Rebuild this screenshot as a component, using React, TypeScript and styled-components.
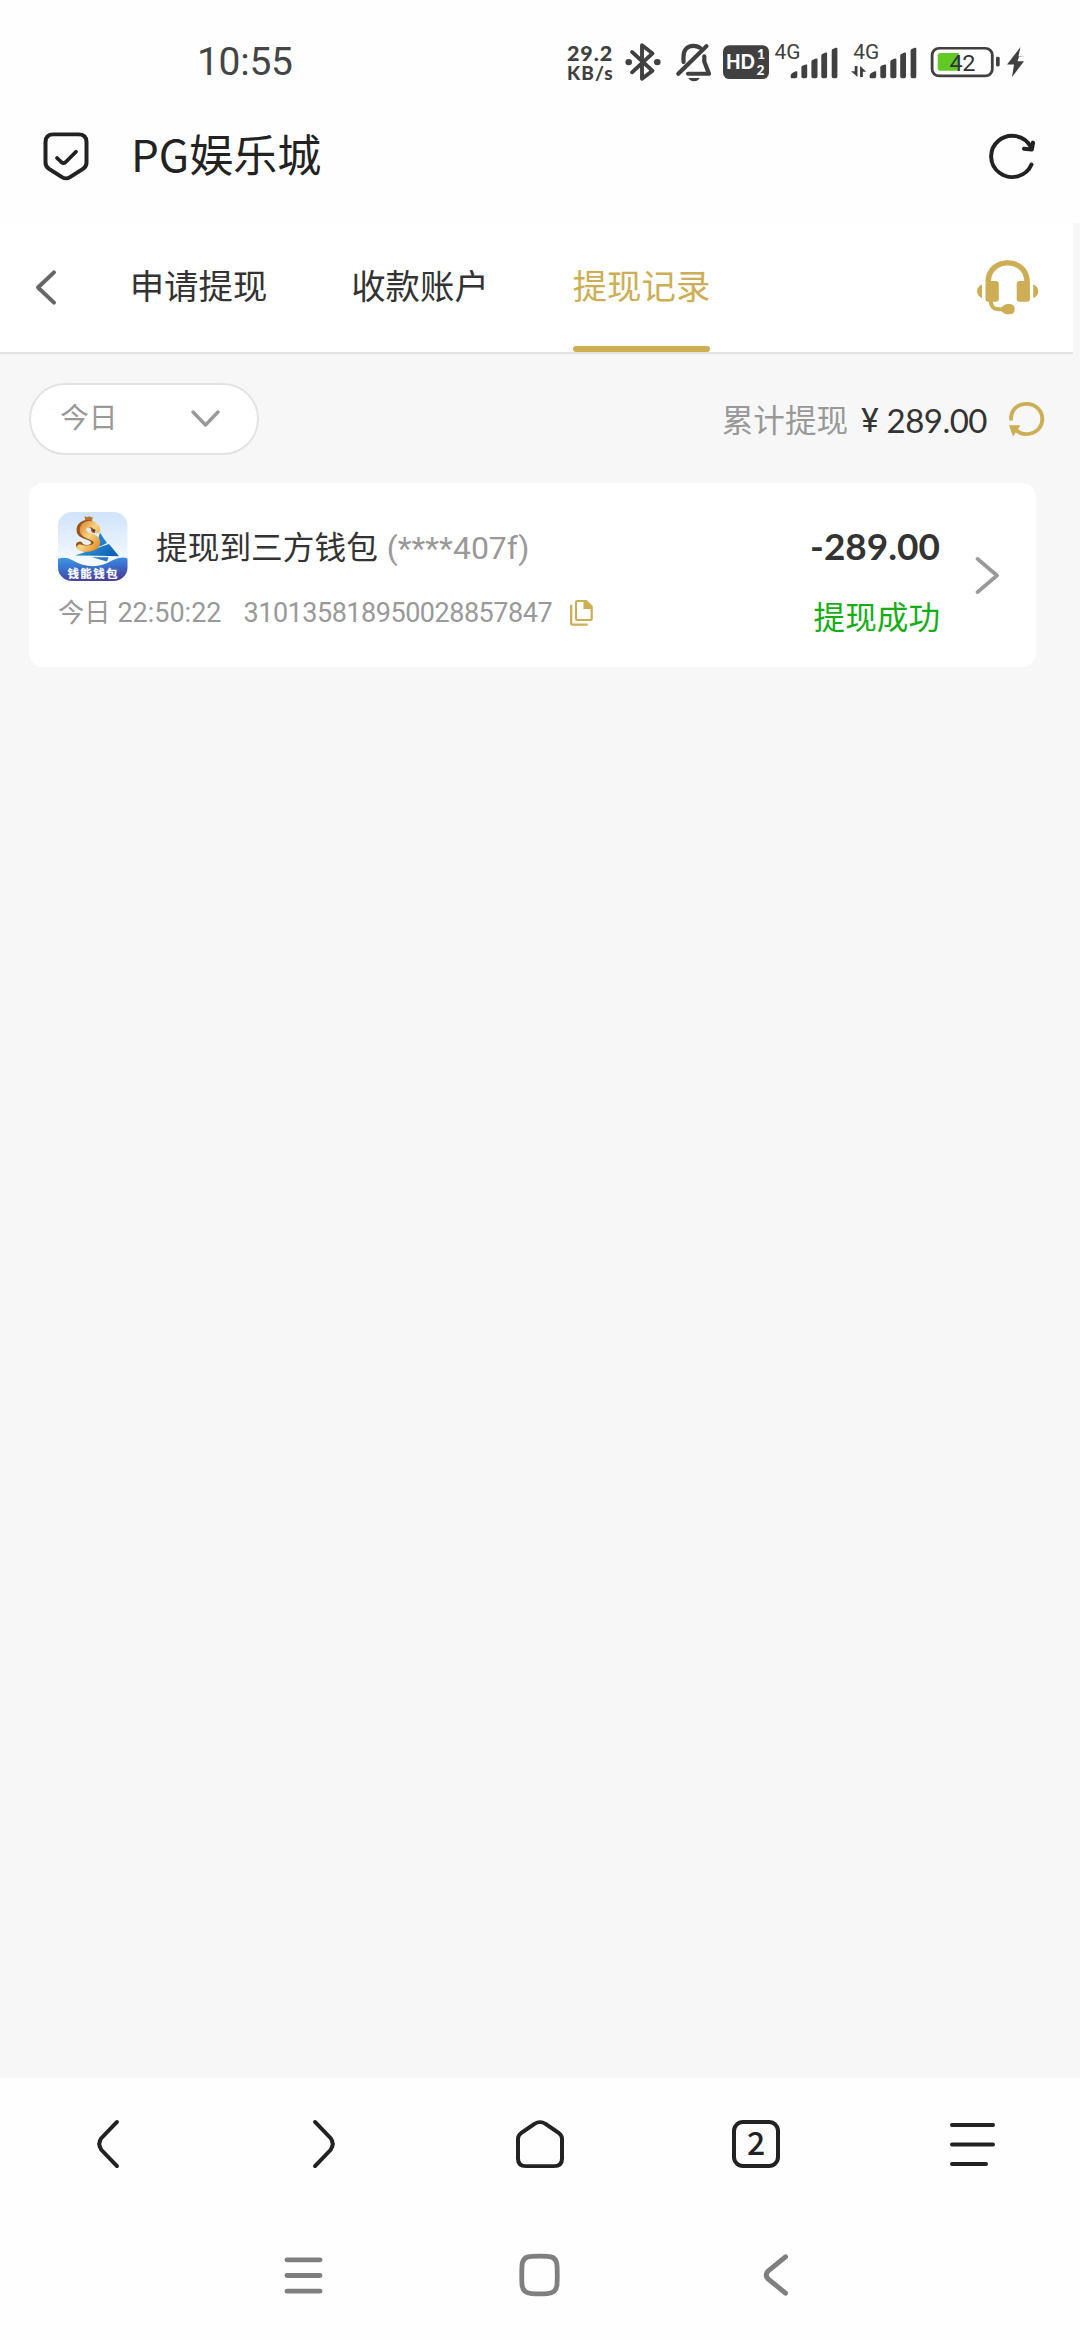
import React from "react";
import styled, { createGlobalStyle } from "styled-components";

const GOLD = "#cdae55";
const CJK = `"Noto Sans CJK SC", sans-serif`;
const NUM = `Roboto, "Noto Sans CJK SC", sans-serif`;
const LATO = `Lato, sans-serif`;
const INK = "#404040";

const GlobalStyle = createGlobalStyle`
  * { box-sizing: border-box; }
  html, body { margin: 0; padding: 0; background: #fff; }
  svg { display: block; flex: none; overflow: visible; }
`;

const Screen = styled.div`
  width: 1080px;
  height: 2340px;
  display: flex;
  flex-direction: column;
  background: #fefefe;
  font-family: ${CJK};
  overflow: hidden;
`;

const Label = styled.span<{
  $size: number;
  $line?: number;
  $color?: string;
  $weight?: number;
  $font?: string;
  $spacing?: number;
  $left?: number;
  $top?: number;
}>`
  flex: none;
  white-space: pre;
  font-family: ${(p) => p.$font ?? CJK};
  font-size: ${(p) => p.$size}px;
  line-height: ${(p) => p.$line ?? 40}px;
  color: ${(p) => p.$color ?? "#333"};
  font-weight: ${(p) => p.$weight ?? 400};
  letter-spacing: ${(p) => p.$spacing ?? 0}px;
  margin-left: ${(p) => p.$left ?? 0}px;
  margin-top: ${(p) => p.$top ?? 0}px;
`;

const StatusBar = styled.header`
  flex: none;
  height: 112px;
  padding: 38px 0 0 197px;
  display: flex;
  align-items: flex-start;
`;

const StatusIcons = styled.div`
  flex: none;
  margin: 2px 0 0 auto;
  width: 513px;
  height: 48px;
  display: flex;
  align-items: flex-start;
`;

const Speed = styled.div`
  width: 58px;
  padding-top: 3px;
  display: flex;
  flex-direction: column;
`;

const TitleBar = styled.div`
  flex: none;
  height: 111px;
  padding: 0 44px 22px 43px;
  display: flex;
  align-items: center;
`;

const Spacer = styled.div`
  flex: 1;
`;

const Page = styled.main`
  flex: 1;
  min-height: 0;
  background: #f7f7f7;
  display: flex;
  flex-direction: column;
`;

const TabBar = styled.nav`
  flex: none;
  width: 1073px;
  height: 131px;
  padding: 0 34px 0 35px;
  background: #fff;
  border-bottom: 2px solid #e3e3e3;
  display: flex;
  align-items: stretch;
`;

const IconCell = styled.div<{ $width: number; $height?: number }>`
  width: ${(p) => p.$width}px;
  height: ${(p) => (p.$height ? `${p.$height}px` : "auto")};
  display: flex;
  align-items: center;
`;

const Tabs = styled.div`
  display: flex;
  gap: 84.500px;
`;

const Tab = styled.div<{ $active?: boolean }>`
  width: 137px;
  display: flex;
  flex-direction: column;
  justify-content: space-between;
  align-items: center;
  padding-top: 36px;
  font-size: 34.4px;
  line-height: 50px;
  white-space: nowrap;
  color: ${(p) => (p.$active ? GOLD : "#333")};

  &::after {
    content: "";
    width: 100%;
    height: 6px;
    border-radius: 3px;
    background: ${(p) => (p.$active ? GOLD : "transparent")};
  }
`;

const Filters = styled.section`
  flex: none;
  height: 129px;
  padding: 29px 35px 0 29px;
  display: flex;
  align-items: flex-start;
`;

const Select = styled.div`
  width: 230px;
  height: 72px;
  padding: 0 37px 0 29px;
  border: 2px solid #e3e3e3;
  border-radius: 36px;
  background: #fff;
  display: flex;
  align-items: center;
  justify-content: space-between;
`;

const Summary = styled.div`
  margin-left: auto;
  height: 72px;
  display: flex;
  align-items: center;
`;

const Card = styled.article`
  flex: none;
  width: 1007px;
  height: 184px;
  margin-left: 29px;
  padding: 29px 35px 0 29px;
  border-radius: 14px;
  background: #fff;
  display: flex;
  align-items: flex-start;
`;

const Details = styled.div`
  flex: 1;
`;

const Line = styled.div<{ $height: number }>`
  height: ${(p) => p.$height}px;
  display: flex;
  align-items: center;
`;

const Result = styled.div`
  display: flex;
  flex-direction: column;
  align-items: flex-end;
`;

const BrowserBar = styled.nav`
  flex: none;
  height: 132px;
  display: grid;
  grid-template-columns: repeat(5, 1fr);
  place-items: center;
`;

const TabCount = styled.div`
  width: 48px;
  height: 48px;
  border: 4px solid #222;
  border-radius: 11px;
  display: flex;
  align-items: center;
  justify-content: center;
`;

const SystemBar = styled.nav`
  flex: none;
  height: 130px;
  padding: 0 186px 0 185px;
  display: grid;
  grid-template-columns: repeat(3, 1fr);
  place-items: center;
`;

const Bars = () => (
  <g fill={INK}>
    <path d="M0 30.500V29q0-2 2-3l3.200-1.600q1.400-.6 1.400.8v4.400q0 1.900-1.900 1.900H1.200Q0 31.500 0 30.500z" />
    <path d="M10.700 20.300q0-1.200 1-1.700l3.300-1.200q1.500-.4 1.500 1v11.300q0 1.800-1.800 1.800h-2.200q-1.800 0-1.800-1.800z" />
    <path d="M20.700 14.300q0-1.200 1-1.700l3.600-1.400q1.500-.4 1.500 1v17.500q0 1.800-1.800 1.800h-2.500q-1.800 0-1.800-1.800z" />
    <path d="M30.600 8.400q0-1.200 1-1.800l3.300-1.500q1.500-.4 1.500 1v23.600q0 1.800-1.800 1.800h-2.200q-1.800 0-1.800-1.800z" />
    <path d="M41 3.200q0-1.200 1-1.800L45.200.1q1.500-.4 1.500 1v28.600q0 1.800-1.800 1.800h-2.100q-1.800 0-1.800-1.800z" />
  </g>
);

const StatusGlyphs = () => (
  <svg width="405" height="48" viewBox="625 40 405 48">
    <g transform="matrix(1 0 0 .968 0 .64)">
      {/* bluetooth */}
      <g fill="none" stroke={INK} strokeWidth="3.900" strokeLinejoin="round" strokeLinecap="round">
        <path d="M632 53 652.500 72.500 642 80.800V46L652.500 54.500 632 74" />
      </g>
      <circle cx="628.700" cy="63.500" r="3.300" fill={INK} />
      <circle cx="657.300" cy="63.500" r="3.300" fill={INK} />
      {/* muted bell */}
      <g fill="none" stroke={INK} strokeWidth="4.200" strokeLinecap="round" strokeLinejoin="round">
        <path d="M678.300 75.500 706.500 47" />
        <path d="M700 48.700Q697 46.700 693.500 46.700C686.500 46.700 683.500 51.500 683.500 58V63.500" />
        <path d="M704.300 57.500V63L709 75.500H688" />
      </g>
      <path d="M688.500 79.800h11q-1.500 3.400-5.500 3.400t-5.500-3.400z" fill={INK} />
      {/* HD badge */}
      <rect x="723" y="46" width="46" height="35" rx="6.500" fill={INK} />
      <g fill="#fefefe" fontFamily={LATO} fontWeight="900">
        <text x="726" y="70.800" fontSize="21" textLength="29" lengthAdjust="spacingAndGlyphs">HD</text>
        <text x="757" y="59.800" fontSize="13.800">1</text>
        <text x="756.500" y="77" fontSize="13.800">2</text>
      </g>
      {/* first SIM */}
      <text x="774.500" y="60.700" fontSize="20.500" fontFamily={NUM} fill={INK} textLength="26" lengthAdjust="spacingAndGlyphs">4G</text>
      <g transform="translate(790.700 48.600)"><Bars /></g>
      {/* second SIM */}
      <text x="853.300" y="60.700" fontSize="20.500" fontFamily={NUM} fill={INK} textLength="26" lengthAdjust="spacingAndGlyphs">4G</text>
      <path d="M854.700 67.500h2.800V79l-6.500-6h3.700zM860 79V67.500l6.300 6h-3.400V79z" fill={INK} />
      <g transform="translate(869.600 48.600)"><Bars /></g>
      {/* battery */}
      <rect x="932.100" y="49.200" width="60.200" height="28.600" rx="7" fill="none" stroke={INK} strokeWidth="2.800" />
      <rect x="996" y="58" width="3.700" height="10" rx="1.500" fill={INK} />
      <path d="M940.500 54h18.300v18.400h-18.300q-2.800 0-2.800-2.800V56.800q0-2.800 2.800-2.800z" fill="#62c924" />
      <text x="949.500" y="72.300" fontSize="23.500" fontFamily={NUM} fill="#333" textLength="26">42</text>
      <path d="M1020.500 48 1007 66h7l-2 13 12-16.500h-6.500l1.500-4.500h6l-6.500-.5z" fill={INK} />
    </g>
  </svg>
);

const Shield = () => (
  <svg width="46" height="49" viewBox="43 136.500 46 51" preserveAspectRatio="none" fill="none" stroke="#222" strokeWidth="4" strokeLinecap="round" strokeLinejoin="round">
    <path d="M53.500 139H78.500Q86.500 139 86.500 147V168.500Q86.500 172.500 83 174.800L70 183.500Q66 186 62 183.500L49 174.800Q45.500 172.500 45.500 168.500V147Q45.500 139 53.500 139z" />
    <path d="M57 163.500 61.500 168Q63.500 169.700 65.500 168L76 157" strokeWidth="3.800" />
  </svg>
);

const Reload = () => (
  <svg width="47" height="46" viewBox="989 137 47 48" preserveAspectRatio="none" fill="none" stroke="#222" strokeWidth="4" strokeLinecap="round" strokeLinejoin="round">
    <path d="M1031.500 168.800A21 21.500 0 1 1 1030.800 150.500" />
    <path d="M1033 146 1031.700 153.200 1024 152.300" strokeWidth="4.200" />
  </svg>
);

const Headset = () => (
  <svg width="62" height="55" viewBox="977 262 62 57" preserveAspectRatio="none" fill={GOLD}>
    <path d="M985.500 287V284.500C985.500 271.500 995 262.300 1007.700 262.300S1029.900 271.500 1029.900 284.500V302.500Q1029.900 305.300 1027 305.300H1019.500Q1016.700 305.300 1016.700 302.500V286.500Q1016.700 283.700 1019.500 283.700H1024.300C1024 274 1017 267.700 1007.700 267.700S991.400 274 991 283.700H996Q998.800 283.700 998.800 286.500V302.500Q998.800 305.300 996 305.300H988.300Q985.500 305.300 985.500 302.500z" />
    <path d="M982 287.500V301.500C975.500 299.500 975.500 289.500 982 287.500zM1033.200 287.500V301.500C1040 299.500 1040 289.500 1033.200 287.500z" />
    <path d="M990.700 304C990.700 310.500 994 313 998.500 313H1004" fill="none" stroke={GOLD} strokeWidth="4" />
    <path d="M1001.500 311.500Q1004 307.700 1008 307.700H1010Q1014.700 308 1014.700 313T1010 318.300H1008Q1004 318.300 1001.500 314.800z" />
  </svg>
);

const WalletLogo = () => (
  <svg width="70" height="69" viewBox="0 0 70 71" preserveAspectRatio="none">
    <defs>
      <clipPath id="tile"><rect width="69.500" height="71" rx="14" /></clipPath>
      <linearGradient id="sky" x1="0" y1="0" x2="0" y2="1">
        <stop offset="0" stopColor="#cfe3fa" />
        <stop offset="0.700" stopColor="#f4f9ff" />
      </linearGradient>
      <linearGradient id="sea" x1="0" y1="0" x2="0.200" y2="1">
        <stop offset="0" stopColor="#3f9be6" />
        <stop offset="0.500" stopColor="#3a6fcb" />
        <stop offset="1" stopColor="#4a4199" />
      </linearGradient>
      <linearGradient id="sail" x1="0" y1="0" x2="1" y2="0.300">
        <stop offset="0" stopColor="#35a5e2" />
        <stop offset="1" stopColor="#1262b8" />
      </linearGradient>
      <linearGradient id="coin" x1="0" y1="0" x2="1" y2="1">
        <stop offset="0" stopColor="#d88a32" />
        <stop offset="0.500" stopColor="#fbd583" />
        <stop offset="1" stopColor="#dd922f" />
      </linearGradient>
    </defs>
    <g clipPath="url(#tile)">
      <rect width="70" height="71" fill="url(#sky)" />
      <path d="M42 21 45.500 27 49 32 43 35 38 36z" fill="#237fc6" />
      <path d="M0 48Q8 45.500 14 49.500Q35 62 54 50Q63 45 70 48V71H0z" fill="url(#sea)" />
      <path d="M17 44.800 51 33 61 45.500 40 45z" fill="url(#sail)" />
      <path d="M34 46.500 50.500 46.500 49 51z" fill="#2479c6" />
      <path d="M26.500 4 29 5.500 31 4.500 35 6 33 10.500 27.500 10.500z" fill="#b9742d" />
      <g fill="none" strokeLinecap="round">
        <path d="M36.500 18C36 10 22.500 9.500 22 18C21.500 26.500 36.500 23.500 36.500 31.500C36.500 40 22 38 21.500 34" stroke="#9c561d" strokeWidth="7" />
        <path d="M39 18.500C38 10.500 25.500 10.500 25 18C24.500 26 39.500 24 39 31.500C38.500 39 25 38 22 36.500" stroke="url(#coin)" strokeWidth="6.500" />
      </g>
      <circle cx="36" cy="19" r="1.300" fill="#3b3021" />
      <text x="9.500" y="67.500" fontFamily={CJK} fontWeight="700" fontSize="11.500" fill="#fff" stroke="#fff" strokeWidth="0.200" textLength="50">钱能钱包</text>
    </g>
  </svg>
);

const CopySlot = styled.div`
  margin-left: 18px;
`;

const CopyIcon = () => (
  <svg width="23" height="26" viewBox="0 0 23 27" preserveAspectRatio="none" fill={GOLD}>
    <path d="M0 5H2.300V24.500H17.700V26.800H2.300Q0 26.800 0 24.500z" />
    <path d="M7.200 0H16.500L22.800 6.300V19.700Q22.800 21.900 20.500 21.900H7.200Q5 21.900 5 19.700V2.200Q5 0 7.200 0zM7.100 2.100V19.800H20.600V9.300H13.500V2.100z" fillRule="evenodd" />
  </svg>
);

const GoldReload = () => (
  <svg width="36" height="35" viewBox="0 0 36 37" preserveAspectRatio="none">
    <path d="M2.300 19.500C1 9 8 2 17.500 2C27 2 33.300 9.500 33.300 18S27 34 17.500 34C12.500 34 9 32 6.800 29" fill="none" stroke={GOLD} strokeWidth="3.900" />
    <path d="M0 24.500H11.500L4 36.500z" fill={GOLD} />
  </svg>
);

type StrokeProps = { w: number; h: number; box?: number; d: string; color: string; width: number };

const Stroke = ({ w, h, box = h, d, color, width }: StrokeProps) => (
  <svg width={w} height={h} viewBox={`0 0 ${w} ${box}`} preserveAspectRatio="none" fill="none" stroke={color} strokeWidth={width} strokeLinecap="round" strokeLinejoin="round">
    <path d={d} />
  </svg>
);

export default function App() {
  return (
    <Screen>
      <GlobalStyle />
      <StatusBar>
        <Label $size={39} $line={48} $font={NUM} $color="#454545" $spacing={-0.3}>10:55</Label>
        <StatusIcons>
          <Speed>
            <Label $size={21.5} $line={20} $font={LATO} $weight={900} $color={INK} $spacing={0.9}>29.2</Label>
            <Label $size={19} $line={20} $font={LATO} $weight={900} $color={INK} $spacing={1.1}>KB/s</Label>
          </Speed>
          <StatusGlyphs />
        </StatusIcons>
      </StatusBar>

      <TitleBar>
        <Shield />
        <Label $size={44} $line={64} $color="#222" $left={42} $top={-8}>PG娱乐城</Label>
        <Spacer />
        <Reload />
      </TitleBar>

      <Page>
        <TabBar>
          <IconCell $width={95}>
            <Stroke w={22} h={35} box={36} d="M19 2.500 3 18 19 33.500" color="#666" width={4} />
          </IconCell>
          <Tabs>
            <Tab>申请提现</Tab>
            <Tab>收款账户</Tab>
            <Tab $active>提现记录</Tab>
          </Tabs>
          <Spacer />
          <IconCell $width={62}>
            <Headset />
          </IconCell>
        </TabBar>

        <Filters>
          <Select>
            <Label $size={28.8} $color="#999" $top={-6}>今日</Label>
            <Stroke w={29} h={18} d="M2 2 14.500 15 27 2" color="#999" width={3.4} />
          </Select>
          <Summary>
            <Label $size={31.6} $color="#999" $top={-2}>累计提现</Label>
            <Label $size={33} $font={NUM} $left={13} $top={3}>¥</Label>
            <Label $size={33} $font={LATO} $left={8} $top={2} $spacing={-0.5}>289.00</Label>
            <IconCell $width={58}>
              <Spacer />
              <GoldReload />
            </IconCell>
          </Summary>
        </Filters>

        <Card>
          <Details>
            <Line $height={69}>
              <WalletLogo />
              <Label $size={31.7} $left={28} $top={-3}>提现到三方钱包</Label>
              <Label $size={32} $font={NUM} $color="#999" $left={9} $top={2}>(****407f)</Label>
            </Line>
            <Line $height={64}>
              <Label $size={26.2} $color="#999" $top={-5}>今日</Label>
              <Label $size={27} $font={NUM} $color="#999" $left={7}>22:50:22</Label>
              <Label $size={27} $font={NUM} $color="#999" $left={22} $spacing={-0.48}>310135818950028857847</Label>
              <CopySlot>
                <CopyIcon />
              </CopySlot>
            </Line>
          </Details>
          <Result>
            <Label $size={37} $line={68} $font={LATO} $weight={700}>-289.00</Label>
            <Label $size={31.6} $line={70} $color="#16ae16">提现成功</Label>
          </Result>
          <IconCell $width={61} $height={126}>
            <Spacer />
            <Stroke w={26} h={37} box={38} d="M2.500 2 22 19 2.500 36" color="#999" width={3.8} />
          </IconCell>
        </Card>
      </Page>

      <BrowserBar>
        <Stroke w={24} h={48} box={50} d="M21 2 5.500 18.700Q1 25 5.500 31.300L21 48" color="#222" width={4} />
        <Stroke w={24} h={48} box={50} d="M3 2 18.500 18.700Q23 25 18.500 31.300L3 48" color="#222" width={4} />
        <Stroke w={48} h={48} box={50} d="M18.500 4Q24 .5 29.500 4L43 13.700Q46 16 46 19.500V40Q46 48 38 48H10Q2 48 2 40V19.500Q2 16 5 13.700z" color="#222" width={4} />
        <TabCount>
          <Label $size={32} $line={40} $weight={500} $color="#222" $top={-7}>2</Label>
        </TabCount>
        <Stroke w={45} h={43} box={44} d="M2 2H43M2 22H43M2 42H36" color="#222" width={4} />
      </BrowserBar>

      <SystemBar>
        <Stroke w={39} h={43} box={44} d="M3 6H36M3 22H36M3 38H36" color="#7f7f7f" width={5} />
        <Stroke w={41} h={42} box={43} d="M12.500 2.500Q20.500 2 28.500 2.500 37.500 2.500 38 12Q38.500 21.500 38 31 37.500 40 28.500 40.500 20.500 41 12.500 40.500 3.500 40 3 31 2.500 21.500 3 12 3.500 2.500 12.500 2.500z" color="#7f7f7f" width={4.8} />
        <Stroke w={26} h={42} box={43} d="M22.500 3 5 17.500Q1.500 21.500 5 25.500L22.500 40" color="#7f7f7f" width={5} />
      </SystemBar>
    </Screen>
  );
}
